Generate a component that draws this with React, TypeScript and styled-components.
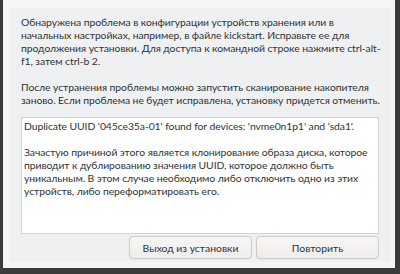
import React from 'react';
import styled, { createGlobalStyle } from 'styled-components';

const GlobalStyle = createGlobalStyle`
  html, body {
    margin: 0;
    padding: 0;
    background: #3b3b3b;
  }
  body {
    width: 400px;
    height: 274px;
    overflow: hidden;
    font-family: Lato, "Noto Sans", sans-serif;
  }
`;

const Screen = styled.div`
  width: 400px;
  height: 274px;
  padding: 0 5px 6px 3px;
  box-sizing: border-box;
`;

const Dialog = styled.div`
  height: 268px;
  background: #f6f5f4;
  padding: 8px 4px 6px 7px;
  box-sizing: border-box;
`;

const Content = styled.div`
  height: 100%;
  background: #eef0f2;
  padding: 8px 12px 3px 11px;
  box-sizing: border-box;
  display: flex;
  flex-direction: column;
`;

const Message = styled.div`
  font-size: 10.4px;
  line-height: 13px;
  letter-spacing: -0.08px;
  color: #2e3436;
`;

const Line = styled.div`
  white-space: nowrap;
`;

const Gap = styled.div`
  height: 13px;
`;

const Details = styled.div`
  margin-top: 10px;
  flex: 1;
  background: #ffffff;
  border: 1px solid #d6d2ce;
  padding: 2px 2px;
  font-size: 10.4px;
  line-height: 13px;
  letter-spacing: -0.08px;
  color: #2e3436;
`;

const Buttons = styled.div`
  display: flex;
  justify-content: flex-end;
  gap: 4px;
  margin-top: 2px;
`;

const Button = styled.button`
  width: 123px;
  height: 23px;
  font-family: inherit;
  font-size: 10.4px;
  color: #2e3436;
  background: linear-gradient(#f7f6f5, #eeedec);
  border: 1px solid #cfcac5;
  border-radius: 4px;
  box-shadow: 0 1px 0 rgba(0, 0, 0, 0.04);
  padding: 0;
`;

const intro = [
  'Обнаружена проблема в конфигурации устройств хранения или в',
  'начальных настройках, например, в файле kickstart. Исправьте ее для',
  'продолжения установки. Для доступа к командной строке нажмите ctrl-alt-',
  'f1, затем ctrl-b 2.',
];

const rescan = [
  'После устранения проблемы можно запустить сканирование накопителя',
  'заново. Если проблема не будет исправлена, установку придется отменить.',
];

const explanation = [
  'Зачастую причиной этого является клонирование образа диска, которое',
  'приводит к дублированию значения UUID, которое должно быть',
  'уникальным. В этом случае необходимо либо отключить одно из этих',
  'устройств, либо переформатировать его.',
];

export default function App() {
  return (
    <>
      <GlobalStyle />
      <Screen>
        <Dialog>
          <Content>
            <Message>
              {intro.map((l) => <Line key={l}>{l}</Line>)}
              <Gap />
              {rescan.map((l) => <Line key={l}>{l}</Line>)}
            </Message>
            <Details>
              <Line>Duplicate UUID '045ce35a-01' found for devices: 'nvme0n1p1' and 'sda1'.</Line>
              <Gap />
              {explanation.map((l) => <Line key={l}>{l}</Line>)}
            </Details>
            <Buttons>
              <Button>Выход из установки</Button>
              <Button>Повторить</Button>
            </Buttons>
          </Content>
        </Dialog>
      </Screen>
    </>
  );
}
